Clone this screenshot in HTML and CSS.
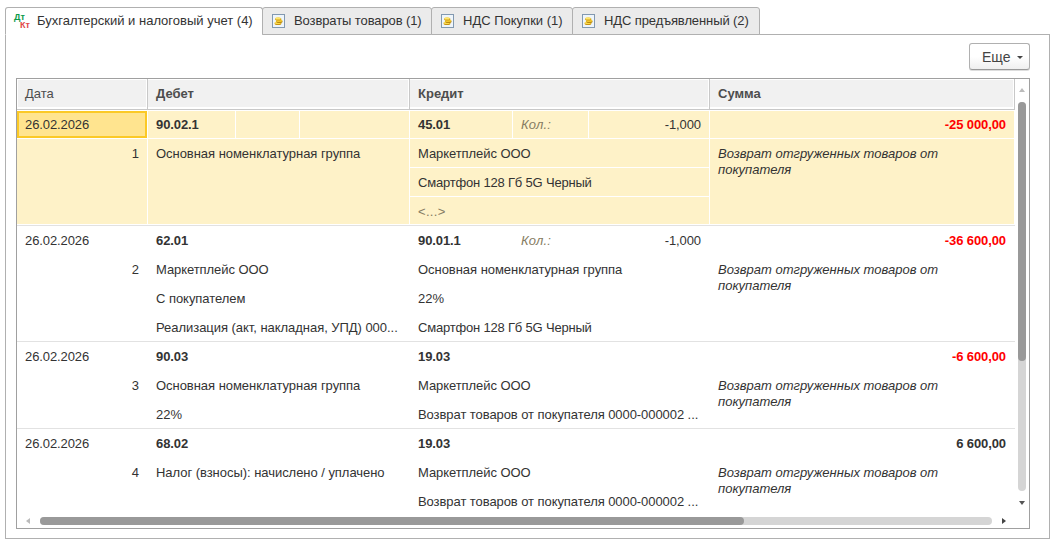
FILE: index.html
```html
<!DOCTYPE html>
<html lang="ru">
<head>
  <meta charset="UTF-8">
  <title>Движения документа</title>
  <link rel="stylesheet" href="styles.css">
</head>
<body>
  <svg width="0" height="0" class="defs">
    <symbol id="coins" viewBox="0 0 13 14">
      <rect x="0.5" y="0.5" width="12" height="13" fill="#eef5fb" stroke="#8299b0"/>
      <ellipse cx="6" cy="9.4" rx="3.4" ry="1.6" fill="#c8940f"/>
      <ellipse cx="5.8" cy="8.8" rx="3.2" ry="1.3" fill="#fbdc55"/>
      <ellipse cx="7.4" cy="7.4" rx="3.2" ry="1.5" fill="#b98a10"/>
      <ellipse cx="7.2" cy="6.7" rx="3.1" ry="1.3" fill="#f3c92f"/>
      <ellipse cx="6.2" cy="5" rx="3.2" ry="1.6" fill="#cf9c14"/>
      <ellipse cx="6" cy="4.4" rx="2.8" ry="1.2" fill="#ffe56a"/>
    </symbol>
  </svg>

  <div class="tabs">
    <div class="tab tab-main active">
      <span class="dtkt"><b class="dt">Дт</b><b class="kt">Кт</b></span>
      <span class="label">Бухгалтерский и налоговый учет (4)</span>
    </div>
    <div class="tab tab-returns"><svg class="coins"><use href="#coins"/></svg><span class="label">Возвраты товаров (1)</span></div>
    <div class="tab tab-buy"><svg class="coins"><use href="#coins"/></svg><span class="label">НДС Покупки (1)</span></div>
    <div class="tab tab-vat"><svg class="coins"><use href="#coins"/></svg><span class="label">НДС предъявленный (2)</span></div>
  </div>

  <div class="panel">
    <div class="toolbar">
      <button class="more"><span>Еще</span><svg width="6" height="3"><path d="M0 0H6L3 3Z" fill="#444"/></svg></button>
    </div>

    <div class="table">
      <div class="main">
        <div class="grid">
          <div class="head">
            <div><span class="plain">Дата</span></div>
            <div><span>Дебет</span></div>
            <div><span>Кредит</span></div>
            <div><span>Сумма</span></div>
          </div>
          <div class="body">
            <div class="entry selected">
              <div class="col">
                <div class="cell date">26.02.2026</div>
                <div class="cell num fill">1</div>
              </div>
              <div class="col">
                <div class="line debit"><div class="cell acc">90.02.1</div><div class="cell"></div><div class="cell"></div></div>
                <div class="cell fill">Основная номенклатурная группа</div>
              </div>
              <div class="col">
                <div class="line credit"><div class="cell acc">45.01</div><div class="cell qty">Кол.:</div><div class="cell num">-1,000</div></div>
                <div class="cell firm">Маркетплейс ООО</div>
                <div class="cell item">Смартфон 128 Гб 5G Черный</div>
                <div class="cell empty">&lt;...&gt;</div>
              </div>
              <div class="col">
                <div class="cell sum neg">-25 000,00</div>
                <div class="cell note fill">Возврат отгруженных товаров от покупателя</div>
              </div>
            </div>

            <div class="entry">
              <div class="col">
                <div class="cell date">26.02.2026</div>
                <div class="cell num">2</div>
              </div>
              <div class="col">
                <div class="cell acc">62.01</div>
                <div class="cell firm">Маркетплейс ООО</div>
                <div class="cell">С покупателем</div>
                <div class="cell">Реализация (акт, накладная, УПД) 000...</div>
              </div>
              <div class="col">
                <div class="line credit"><div class="cell acc">90.01.1</div><div class="cell qty">Кол.:</div><div class="cell num">-1,000</div></div>
                <div class="cell">Основная номенклатурная группа</div>
                <div class="cell">22%</div>
                <div class="cell item">Смартфон 128 Гб 5G Черный</div>
              </div>
              <div class="col">
                <div class="cell sum neg">-36 600,00</div>
                <div class="cell note fill">Возврат отгруженных товаров от покупателя</div>
              </div>
            </div>

            <div class="entry">
              <div class="col">
                <div class="cell date">26.02.2026</div>
                <div class="cell num">3</div>
              </div>
              <div class="col">
                <div class="cell acc">90.03</div>
                <div class="cell">Основная номенклатурная группа</div>
                <div class="cell">22%</div>
              </div>
              <div class="col">
                <div class="cell acc">19.03</div>
                <div class="cell firm">Маркетплейс ООО</div>
                <div class="cell doc">Возврат товаров от покупателя 0000-000002 ...</div>
              </div>
              <div class="col">
                <div class="cell sum neg">-6 600,00</div>
                <div class="cell note fill">Возврат отгруженных товаров от покупателя</div>
              </div>
            </div>

            <div class="entry">
              <div class="col">
                <div class="cell date">26.02.2026</div>
                <div class="cell num">4</div>
              </div>
              <div class="col">
                <div class="cell acc">68.02</div>
                <div class="cell">Налог (взносы): начислено / уплачено</div>
              </div>
              <div class="col">
                <div class="cell acc">19.03</div>
                <div class="cell firm">Маркетплейс ООО</div>
                <div class="cell doc">Возврат товаров от покупателя 0000-000002 ...</div>
              </div>
              <div class="col">
                <div class="cell sum">6 600,00</div>
                <div class="cell note fill">Возврат отгруженных товаров от покупателя</div>
              </div>
            </div>
          </div>
        </div>
        <div class="vscroll">
          <svg width="6" height="4"><path d="M0 4H6L3 0Z" fill="#bbb"/></svg>
          <div class="track"><div class="thumb"></div></div>
          <svg width="6" height="4"><path d="M0 0H6L3 4Z" fill="#555"/></svg>
        </div>
      </div>
      <div class="hscroll">
        <svg width="4" height="6"><path d="M4 0V6L0 3Z" fill="#bbb"/></svg>
        <div class="track"><div class="thumb"></div></div>
        <svg width="4" height="6"><path d="M0 0V6L4 3Z" fill="#444"/></svg>
      </div>
    </div>
  </div>
</body>
</html>
```

FILE: styles.css
```css
* {
  box-sizing: border-box;
}
body {
  margin: 0;
  padding: 7px 5px 0;
  background: #fff;
  color: #333;
  font: 13px "Liberation Sans", Arial, sans-serif;
  letter-spacing: -0.04px;
  white-space: nowrap;
}
svg {
  display: block;
  flex: none;
}
.defs {
  position: absolute;
}

/* tabs */
.tabs {
  display: flex;
  height: 28px;
}
.tab {
  display: flex;
  align-items: center;
  height: 28px;
  margin-right: -1px;
  padding: 0 0 1px 9px;
  background: #ebebeb;
  border: 1px solid #b0b0b0;
  border-radius: 3px 3px 0 0;
  letter-spacing: -0.1px;
}
.tab.active {
  background: #fff;
  border-bottom-color: #fff;
  padding-left: 8px;
  letter-spacing: 0;
}
.tab-main { width: 258px; }
.tab-returns { width: 170px; }
.tab-buy { width: 142px; letter-spacing: 0; }
.tab-vat { width: 188px; }
.coins {
  width: 13px;
  height: 14px;
  margin-right: 9px;
}
.dtkt {
  width: 16px;
  margin-right: 7px;
  font-size: 9px;
  line-height: 8px;
  letter-spacing: 0;
}
.dtkt b {
  display: block;
}
.dt {
  color: #0a9a4a;
}
.kt {
  color: #e04848;
  text-align: right;
}

.panel {
  width: 1045px;
  height: 505px;
  margin-top: -1px;
  padding: 8px 19px 0 10px;
  border: 1px solid #b0b0b0;
}
.toolbar {
  display: flex;
  justify-content: flex-end;
  height: 35px;
}
.more {
  display: flex;
  align-items: center;
  gap: 6px;
  width: 61px;
  height: 27px;
  padding: 0 0 0 12px;
  background: linear-gradient(#fff 50%, #efefef);
  border: 1px solid #b0b0b0;
  border-bottom-color: #999;
  border-radius: 3px;
  color: #444;
  font: inherit;
  font-size: 14px;
  box-shadow: 0 1px 0 #ddd;
}
.more svg {
  margin-top: 2px;
}

/* table */
.table {
  width: 1014px;
  height: 451px;
  border: 1px solid #a0a0a0;
}
.main {
  display: flex;
  height: 433px;
}
.grid {
  display: flex;
  flex-direction: column;
  width: 998px;
}
.head, .entry {
  display: grid;
  flex: none;
  grid-template-columns: 131px 262px 300px 305px;
}
.head {
  height: 31px;
  border-bottom: 1px solid #c8c8c8;
}
.head div {
  display: flex;
  padding: 1px 1px 2px 0;
  border-right: 1px solid #c8c8c8;
}
.head div:first-child {
  padding-left: 1px;
}
.head span {
  flex: 1;
  padding-left: 8px;
  background: #f1f1f1;
  color: #4d4d4d;
  font-weight: bold;
  letter-spacing: 0;
  line-height: 27px;
}
.head .plain {
  padding-left: 7px;
  font-weight: normal;
}
.body {
  flex: 1;
  overflow: hidden;
}
.entry {
  border-bottom: 1px solid #e2e2e2;
}
.entry:last-child {
  border-bottom: 0;
}
.col {
  display: flex;
  flex-direction: column;
  min-width: 0;
}
.cell {
  flex: none;
  height: 29px;
  padding: 0 8px;
  border: 0 solid #fff;
  border-width: 0 1px 1px 0;
  line-height: 29px;
  overflow: hidden;
}
.col > .cell:last-child {
  height: 28px;
}
.entry .fill {
  flex: 1;
  height: auto;
}
.selected .cell {
  background: #fef2c8;
}
.selected .line {
  padding-top: 1px;
}
.line {
  display: grid;
  height: 29px;
}
.selected .line .cell {
  height: 28px;
  line-height: 27px;
}
.selected .sum {
  height: 28px;
  margin-top: 1px;
  line-height: 27px;
}
.debit {
  grid-template-columns: 88px 64px 110px;
}
.credit {
  grid-template-columns: 103px 76px 121px;
}
.num, .sum {
  text-align: right;
}
.num, .date, .acc, .sum {
  letter-spacing: -0.1px;
}
.firm, .doc {
  letter-spacing: -0.07px;
}
.item {
  letter-spacing: -0.19px;
}
.selected .date {
  height: 27px;
  margin: 1px 1px 1px 0;
  padding: 0 6px;
  border: 2px solid #fbc926;
  background: #ffe48f;
  line-height: 24px;
}
.acc, .sum {
  font-weight: bold;
}
.neg {
  color: #f00;
}
.qty, .empty {
  color: #857c62;
}
.qty {
  letter-spacing: 0.2px;
}
.empty {
  letter-spacing: 0.3px;
}
.qty, .note {
  font-style: italic;
}
.cell.note {
  padding: 7px 60px 0 8px;
  letter-spacing: 0;
  line-height: 16px;
  white-space: normal;
}

/* scrollbars */
.track {
  background: #d5d5d5;
  border-radius: 4px;
}
.thumb {
  background: #999;
  border-radius: 4px;
}
.vscroll {
  display: flex;
  flex-direction: column;
  align-items: center;
  width: 14px;
  padding-top: 9px;
}
.vscroll .track {
  width: 8px;
  height: 389px;
  margin: 10px 0;
}
.vscroll .thumb {
  height: 259px;
}
.hscroll {
  display: flex;
  align-items: center;
  height: 16px;
  padding: 2px 0 0 9px;
}
.hscroll .track {
  width: 952px;
  height: 8px;
  margin: 0 10px;
}
.hscroll .thumb {
  width: 704px;
  height: 8px;
}
```
